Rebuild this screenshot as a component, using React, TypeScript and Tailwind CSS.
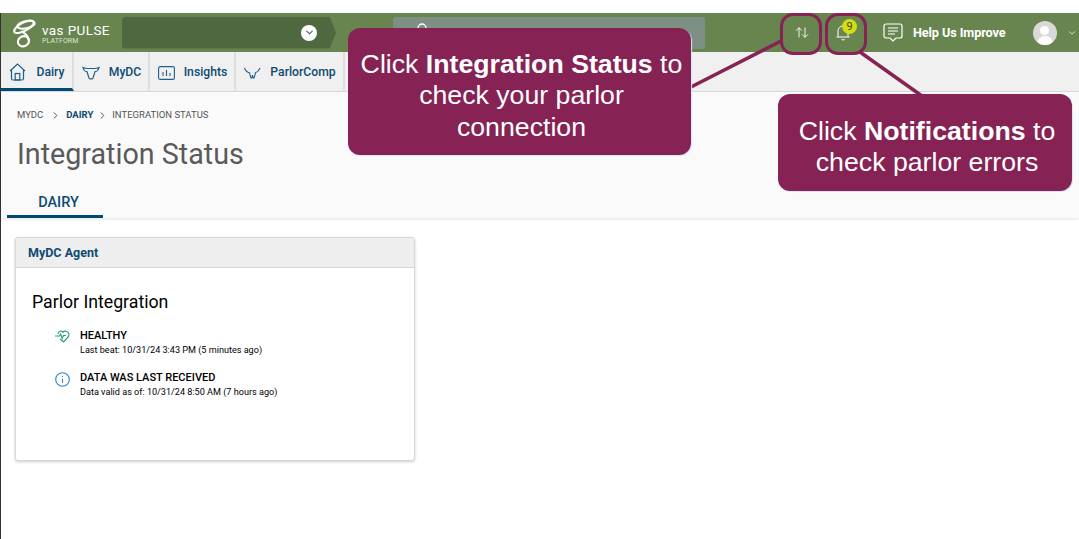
import React from "react";
import { ChevronDown, ChevronRight } from "lucide-react";

const font = "[font-family:Roboto,'Liberation_Sans',sans-serif]";

function Tab({ icon, label, active, w, gap }: { icon: React.ReactNode; label: string; active?: boolean; w: string; gap: string }) {
  return (
    <div className={`${w} ${gap} h-full flex items-center justify-center pl-[1px] border-r-2 border-[#dedede] text-[12.200px] font-medium text-[#0d4a72] ${active ? "border-b-[3px] border-b-[#004b76] pt-[4px]" : "pt-[2px]"}`}>
      {icon}
      <span>{label}</span>
    </div>
  );
}

const HomeIcon = () => (
  <svg width="17" height="18" viewBox="0 0 17 18" fill="none" stroke="#1c618c" strokeWidth="1.2"><path d="M1 8 8.5 1 16 8M2.5 7v8.500a1.500 1.500 0 0 0 1.500 1.500h9a1.500 1.500 0 0 0 1.500-1.500V7" /><rect x="6.200" y="10.500" width="4.600" height="6.500" /></svg>
);
const CowIcon = () => (
  <svg width="18" height="14" viewBox="0 0 18 14" fill="none" stroke="#1c618c" strokeWidth="1.200"><path d="M1 1.500c2 1 3 1 4.500 1h7c1.500 0 2.500 0 4.500-1-.5 2.500-1.500 4-4 4.200L11 12a1.500 1.500 0 0 1-1.300.9H8.300A1.500 1.500 0 0 1 7 12L5 5.700C2.500 5.500 1.500 4 1 1.500Z" /></svg>
);
const ChartIcon = () => (
  <svg width="17" height="14" viewBox="0 0 17 14" fill="none" stroke="#1c618c" strokeWidth="1.100"><rect x=".6" y=".6" width="15.800" height="12.800" rx="1.500" /><path d="M5 10V6M8.500 10V4M12 10V7" /></svg>
);
const HornIcon = () => (
  <svg width="17" height="12" viewBox="0 0 17 12" fill="none" stroke="#1c618c" strokeWidth="1.100"><path d="M.5 1c1 3 3 4.500 5 4.700.5 2 1 4.300 1.500 5.300h.8l.7-3 .7 3h.8c.5-1 1-3.300 1.500-5.300 1.500-.5 3.500-2 4.500-4.700" /></svg>
);

const Logo = () => (
  <svg width="26" height="30" viewBox="0 0 25 29" fill="none" stroke="#fff" strokeWidth="2" className="shrink-0">
    <ellipse cx="11.500" cy="8.500" rx="10.500" ry="4" transform="rotate(-28 11.500 8.500)" />
    <ellipse cx="13.500" cy="6.500" rx="8.500" ry="3.500" transform="rotate(-12 13.500 6.500)" />
    <path d="M9 13c4 2 7 5 7 9" />
    <ellipse cx="11" cy="22.500" rx="5.500" ry="4.800" transform="rotate(-25 11 22.500)" />
  </svg>
);

function Ring() {
  return <div className="absolute inset-0 rounded-[13px] border-[3.500px] border-[#862354]" />;
}

function Callout({ pos, children }: { pos: string; children: React.ReactNode }) {
  return (
    <div className={`absolute ${pos} flex items-center justify-center rounded-[12px] bg-[#862354] text-center text-[26.700px] leading-[31.500px] text-white shadow-[1px_1px_1px_#d5e6f5] [font-family:'Liberation_Sans',Arial,sans-serif]`}>
      <div className="pt-[9px] pl-[4px]">{children}</div>
    </div>
  );
}

export default function App() {
  return (
    <div className={`relative w-[1079px] h-[539px] overflow-hidden bg-white ${font}`}>
      <div className="h-[13px]" />
      <div className="border-l border-[#333] h-[526px] flex flex-col">
        {/* top bar */}
        <header className="h-[39px] shrink-0 bg-[#688550] flex items-center text-white">
          <div className="w-[121px] pl-[11px] flex items-center gap-[4px]">
            <Logo />
            <div className="flex flex-col pt-[3px]">
              <span className="text-[13.500px] leading-[14px] tracking-[0.4px] whitespace-nowrap">vas PULSE</span>
              <span className="text-[7px] leading-[9px] tracking-[0.1px] text-[#dfe6d8]">PLATFORM</span>
            </div>
          </div>
          <div className="w-[214px] h-[32px] flex items-center justify-end pr-[19px] rounded-[4px] bg-[#4f683f] [clip-path:polygon(0_0,97%_0,100%_50%,97%_100%,0_100%)]">
            <div className="w-[16px] h-[16px] rounded-full bg-white flex items-center justify-center">
              <ChevronDown size={11} strokeWidth={2.500} className="text-[#4f683f]" />
            </div>
          </div>
          <div className="ml-[57px] w-[312px] h-[32px] rounded-[3px] bg-[#7e8f83] pl-[23px] pt-[6px]">
            <svg width="12" height="12" viewBox="0 0 12 12" fill="none" stroke="#fff" strokeWidth="1.300"><circle cx="6" cy="5" r="4" /></svg>
          </div>
          <div className="ml-[81px] w-[32px] flex justify-center">
            <svg width="14" height="11" viewBox="0 0 14 11" fill="none" stroke="#fff" strokeWidth="0.900"><path d="M4 10.500V.7M1 3.700l3-3 3 3M10 .5v9.800M7 7.300l3 3 3-3" /></svg>
          </div>
          <div className="ml-[9px] w-[32px] flex justify-center relative">
            <svg width="16" height="17" viewBox="0 0 16 17" fill="none" stroke="#fff" strokeWidth="1"><path d="M3 12.500V7a5 5 0 0 1 10 0v5.500M1.500 13h13M6.500 15a1.600 1.600 0 0 0 3 0" /></svg>
            <div className="absolute left-[15px] -top-[5px] w-[15px] h-[15px] rounded-full bg-[#d4dd12] text-[#3f4a20] text-[11px] leading-[15px] text-center">9</div>
          </div>
          <div className="ml-[24px] flex items-center gap-[10px]">
            <svg width="20" height="19" viewBox="0 0 20 19" fill="none" stroke="#fff" strokeWidth="1.200"><path d="M3 1h14a2 2 0 0 1 2 2v10a2 2 0 0 1-2 2h-4l-3 3-3-3H3a2 2 0 0 1-2-2V3a2 2 0 0 1 2-2ZM5 5h10M5 8h10M5 11h7" /></svg>
            <span className="text-[12.700px] font-bold tracking-[-0.1px] whitespace-nowrap">Help Us Improve</span>
          </div>
          <div className="ml-[27px] w-[24px] h-[24px] rounded-full bg-[#d9d9d9] overflow-hidden flex flex-col items-center">
            <div className="mt-[5px] w-[9px] h-[9px] rounded-full bg-white" />
            <div className="mt-[1px] w-[16px] h-[9px] rounded-t-[8px] bg-white" />
          </div>
          <ChevronDown size={10} className="ml-[10px] text-[#e8ede2]" />
        </header>

        {/* nav */}
        <nav className="h-[40px] shrink-0 bg-[#f0f0f0] flex items-center border-b border-[#dcdcdc]">
          <Tab w="w-[73px]" gap="gap-[10px]" active icon={<HomeIcon />} label="Dairy" />
          <Tab w="w-[76px]" gap="gap-[9px]" icon={<CowIcon />} label="MyDC" />
          <Tab w="w-[86px]" gap="gap-[9px]" icon={<ChartIcon />} label="Insights" />
          <Tab w="w-[109px]" gap="gap-[9px]" icon={<HornIcon />} label="ParlorComp" />
        </nav>

        {/* page head */}
        <section className="h-[126px] shrink-0 bg-[#fafafa] shadow-[0_1px_3px_rgba(0,0,0,0.12)] flex flex-col">
          <div className="mt-[16px] ml-[16px] h-[14px] flex items-center text-[9.500px] text-[#555]">
            <span>MYDC</span>
            <ChevronRight size={11} className="ml-[7px] mr-[3px] text-[#445]" />
            <span className="font-bold text-[#0d4a72] ml-[2px]">DAIRY</span>
            <ChevronRight size={11} className="ml-[4px] mr-[4px] text-[#445]" />
            <span>INTEGRATION STATUS</span>
          </div>
          <h1 className="mt-[14px] ml-[16px] text-[28.700px] leading-[36px] text-[#5a5a5a]">Integration Status</h1>
          <div className="mt-auto ml-[6px] w-[96px] h-[30px] pl-[7px] border-b-[3px] border-[#004b76] text-center text-[#0d4a72] text-[14.500px] font-medium leading-[30px]">DAIRY</div>
        </section>

        {/* card */}
        <main className="flex-1 pt-[19px] pl-[14px]">
          <div className="w-[400px] h-[224px] rounded-[3px] border border-[#d8d8d8] bg-white shadow-[0_1px_3px_rgba(0,0,0,0.2)] overflow-hidden">
            <div className="h-[30px] bg-[#eeeeee] border-b border-[#d8d8d8] pl-[12px] pt-[1px] flex items-center text-[12.500px] font-bold text-[#0d4a72]">MyDC Agent</div>
            <div className="pl-[16px] pt-[24px]">
              <h2 className="text-[17.700px] leading-[20px] text-black">Parlor Integration</h2>
              <div className="mt-[17px] ml-[23px] flex gap-[10px]">
                <svg width="15" height="13" viewBox="0 0 15 13" fill="none" stroke="#2a9d72" strokeWidth="1.100" className="mt-[1px]"><path d="M3 4V3.500C3.500 1 6.500.3 8 2.300 9.500.3 13 1 13.800 3.500c.6 2-.5 3.700-2 5L8.500 12 5 9M0 6h4.500l1.200-2 1.500 4.500 1.300-3h2.500" /></svg>
                <div>
                  <div className="text-[11px] leading-[14px] font-medium text-black">HEALTHY</div>
                  <div className="text-[9.100px] leading-[14px] text-black">Last beat: 10/31/24 3:43 PM (5 minutes ago)</div>
                </div>
              </div>
              <div className="mt-[14px] ml-[23px] flex gap-[10px]">
                <svg width="15" height="15" viewBox="0 0 15 15" fill="none" stroke="#2a86c8" strokeWidth="1.100" className="mt-[1px]"><circle cx="7.500" cy="7.500" r="6.800" /><path d="M7.500 6.500V11M7.500 4v1" /></svg>
                <div>
                  <div className="text-[11px] leading-[14px] font-medium text-black">DATA WAS LAST RECEIVED</div>
                  <div className="text-[9.100px] leading-[14px] text-black">Data valid as of: 10/31/24 8:50 AM (7 hours ago)</div>
                </div>
              </div>
            </div>
          </div>
        </main>
      </div>

      {/* tutorial overlay */}
      <svg width="1079" height="539" className="absolute inset-0 pointer-events-none" fill="none" stroke="#862354" strokeWidth="3.500">
        <path d="M781 41 689 88" />
        <path d="M860 52 922 96" />
      </svg>
      <div className="absolute left-[780px] top-[13px] w-[42px] h-[42px]"><Ring /></div>
      <div className="absolute left-[825px] top-[13px] w-[42px] h-[42px]"><Ring /></div>
      <Callout pos="left-[348px] top-[28px] w-[343px] h-[127px]">
        Click <b>Integration Status</b> to<br />check your parlor<br />connection
      </Callout>
      <Callout pos="left-[778px] top-[94px] w-[294px] h-[97px]">
        Click <b>Notifications</b> to<br />check parlor errors
      </Callout>
    </div>
  );
}
